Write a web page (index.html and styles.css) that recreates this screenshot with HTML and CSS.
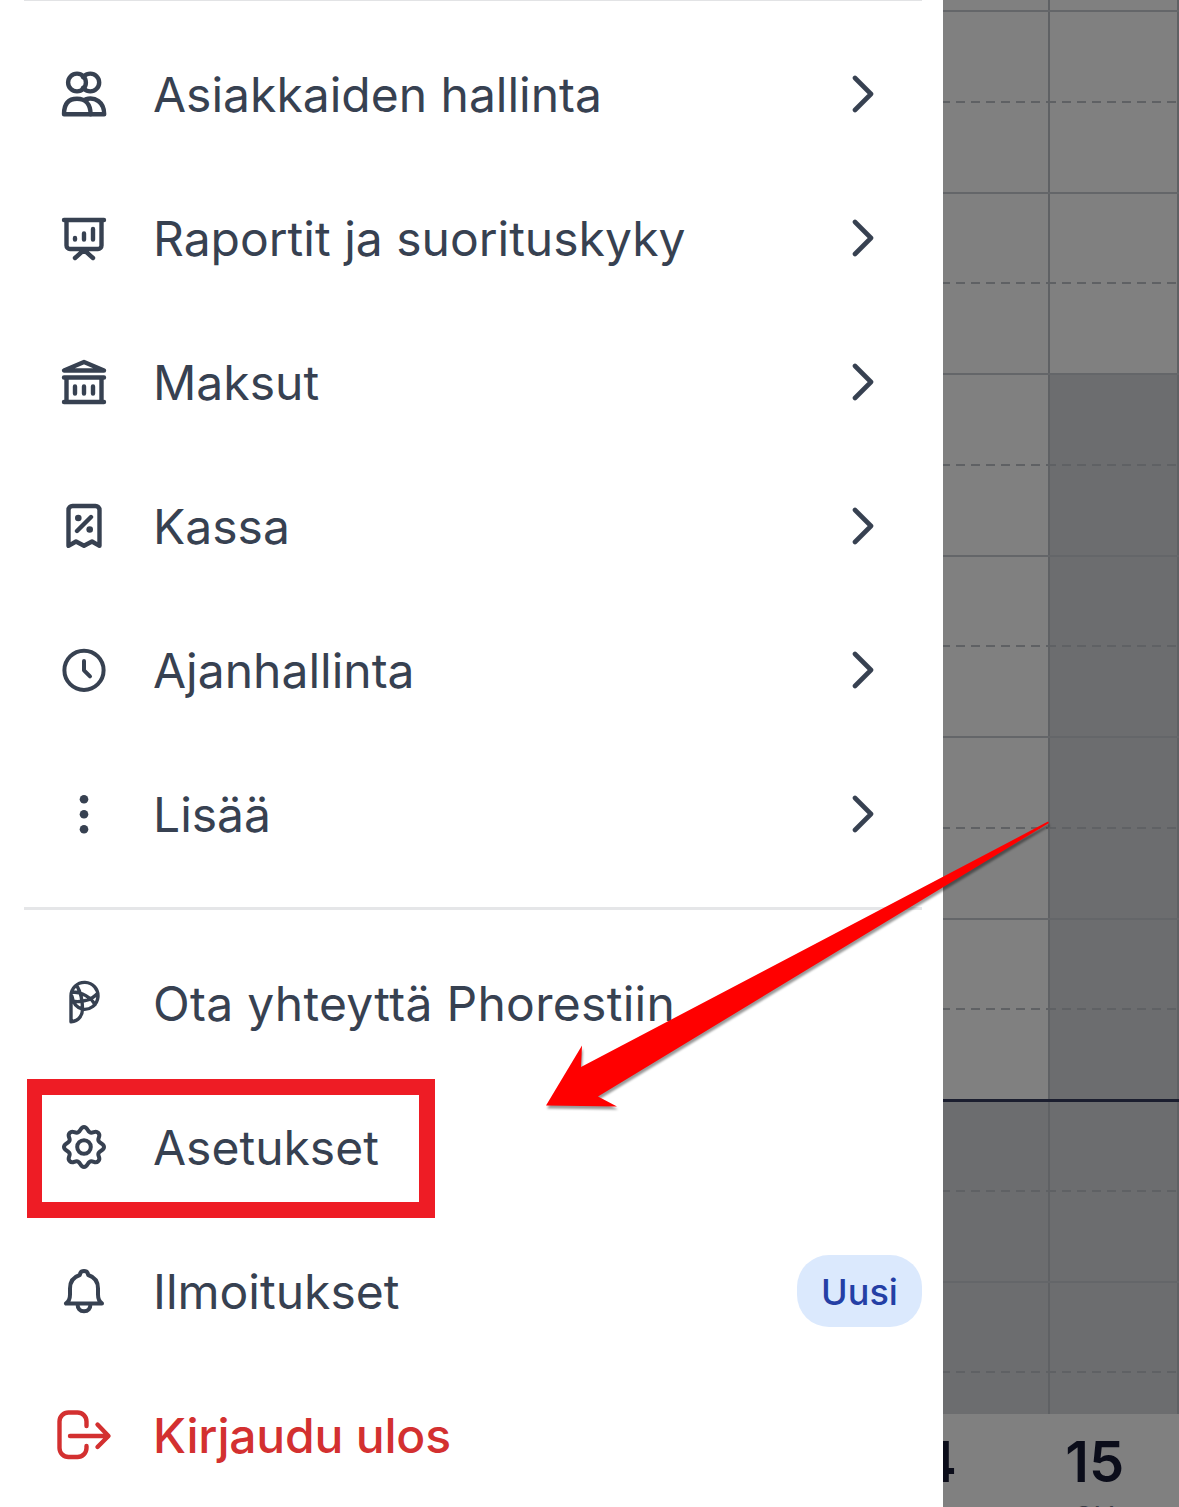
FILE: index.html
```html
<!DOCTYPE html>
<html lang="fi">
<head>
  <meta charset="UTF-8">
  <title>Valikko</title>
  <link rel="stylesheet" href="styles.css">
</head>
<body>
  <div class="screen">
    <nav class="drawer">
      <ul class="menu menu-main">
        <li class="menu-item">
          <svg class="icon" viewBox="0 0 54 54">
            <circle cx="20" cy="15.500" r="8.900"/>
            <path d="M27 9.200a8.900 8.900 0 1 1 0 12.600M27 9.200l-1 1M27 21.800l-1-1"/>
            <path d="M7 47.200C7 37 11.500 31.800 20 31.800S33.600 37 33.600 47.200z"/>
            <path d="M28.500 32.300C38 29.500 47.200 35 47.200 47.200H33.600"/>
          </svg>
          <span class="label">Asiakkaiden hallinta</span>
          <svg class="chevron" viewBox="0 0 24 40"><path d="M3 4l16 16L3 36"/></svg>
        </li>
        <li class="menu-item">
          <svg class="icon" viewBox="0 0 54 54">
            <path d="M7 9h40M9.500 9v25.500a3.500 3.500 0 0 0 3.500 3.500h28a3.500 3.500 0 0 0 3.500-3.500V9M27 39l-9 8M27 39l9 8M18 27v1.500M27 22.500v6M36 18v10.500"/>
          </svg>
          <span class="label">Raportit ja suorituskyky</span>
          <svg class="chevron" viewBox="0 0 24 40"><path d="M3 4l16 16L3 36"/></svg>
        </li>
        <li class="menu-item">
          <svg class="icon" viewBox="0 0 54 54">
            <path d="M7 15.500h40L27 7zM7 22.500h40M9.500 22.500V47M44.500 22.500V47M7 47h40M18 31.500v7M27 31.500v7M36 31.500v7"/>
          </svg>
          <span class="label">Maksut</span>
          <svg class="chevron" viewBox="0 0 24 40"><path d="M3 4l16 16L3 36"/></svg>
        </li>
        <li class="menu-item">
          <svg class="icon" viewBox="0 0 54 54">
            <path d="M11.500 46.800V11a4 4 0 0 1 4-4h23a4 4 0 0 1 4 4v35.800l-7.500-4.300-8 4.300-8-4.300zM20 32l14-14"/>
            <circle class="dot" cx="21.300" cy="19" r="3.300"/>
            <circle class="dot" cx="32.700" cy="30.500" r="3.300"/>
          </svg>
          <span class="label">Kassa</span>
          <svg class="chevron" viewBox="0 0 24 40"><path d="M3 4l16 16L3 36"/></svg>
        </li>
        <li class="menu-item">
          <svg class="icon icon-gear" viewBox="0 0 54 54">
            <circle cx="27" cy="27.300" r="19.600"/>
            <path d="M27 18v9.300l6 6"/>
          </svg>
          <span class="label">Ajanhallinta</span>
          <svg class="chevron" viewBox="0 0 24 40"><path d="M3 4l16 16L3 36"/></svg>
        </li>
        <li class="menu-item">
          <svg class="icon" viewBox="0 0 54 54">
            <circle class="dot" cx="27" cy="12.300" r="4.300"/>
            <circle class="dot" cx="27" cy="27.300" r="4.300"/>
            <circle class="dot" cx="27" cy="42.300" r="4.300"/>
          </svg>
          <span class="label">Lisää</span>
          <svg class="chevron" viewBox="0 0 24 40"><path d="M3 4l16 16L3 36"/></svg>
        </li>
      </ul>

      <ul class="menu menu-secondary">
        <li class="menu-item contact">
          <svg class="icon icon-thin" viewBox="0 0 54 54">
            <path d="M14 45.800V20a13.500 13.500 0 1 1 11.500 13.200M14 45.800c8-1 11.500-6.500 11.500-13 0-9-1.500-16-5.500-23M15.500 16c9.500 0 18.500 5.500 22.500 12.500M14.500 25c10 2 20-1 26-7.500M15 20.500c1 6.500 4.500 11 10.500 12.700"/>
          </svg>
          <span class="label">Ota yhteyttä Phorestiin</span>
        </li>
        <li class="menu-item">
          <svg class="icon icon-gear" viewBox="0 0 54 54">
            <path d="M27 7C31 7 30.500 12.700 34.300 12.700C37 12.700 38.700 10 41.200 12.800C44 15.300 41.300 17 41.300 19.700C41.300 23.500 47 23 47 27C47 31 41.300 30.500 41.300 34.300C41.300 37 44 38.700 41.200 41.200C38.700 44 37 41.300 34.300 41.300C30.500 41.300 31 47 27 47C23 47 23.500 41.300 19.700 41.300C17 41.300 15.300 44 12.800 41.200C10 38.700 12.700 37 12.700 34.300C12.700 30.500 7 31 7 27C7 23 12.700 23.500 12.700 19.700C12.700 17 10 15.300 12.800 12.800C15.300 10 17 12.700 19.700 12.700C23.500 12.700 23 7 27 7Z"/>
            <circle cx="27" cy="27" r="6.800"/>
          </svg>
          <span class="label">Asetukset</span>
        </li>
        <li class="menu-item">
          <svg class="icon icon-gear" viewBox="0 0 54 54">
            <path d="M9 39.500h36c-2.800-2-4-4.500-4-9v-6c0-7-3.500-11.500-9.800-13.500C31 8.500 29.500 7 27 7s-4 1.500-4.200 4C16.500 13 13 17.500 13 24.500v6c0 4.500-1.200 7-4 9zM20.500 40c0 4.500 2.500 7.300 6.500 7.300s6.500-2.800 6.500-7.300"/>
          </svg>
          <span class="label">Ilmoitukset</span>
          <span class="badge">Uusi</span>
        </li>
        <li class="menu-item logout">
          <svg class="icon" viewBox="0 0 54 54">
            <path d="M29.500 18V13.500a9 9 0 0 0-9-9H11.500a9 9 0 0 0-9 9V40a9 9 0 0 0 9 9h9a9 9 0 0 0 9-9V38M13 28h37.500M40.500 16.500L51.500 28 40.500 39"/>
          </svg>
          <span class="label">Kirjaudu ulos</span>
        </li>
      </ul>
    </nav>

    <div class="calendar">
      <div class="slots">
        <div class="slot slot-first"><i></i><i></i></div>
        <div class="slot"><i></i><i></i></div>
        <div class="slot half"><i></i><i></i></div>
        <div class="slot"><i></i><i></i></div>
        <div class="slot half"><i></i><i></i></div>
        <div class="slot"><i></i><i class="closed"></i></div>
        <div class="slot half"><i></i><i class="closed"></i></div>
        <div class="slot"><i></i><i class="closed"></i></div>
        <div class="slot half"><i></i><i class="closed"></i></div>
        <div class="slot"><i></i><i class="closed"></i></div>
        <div class="slot half"><i></i><i class="closed"></i></div>
        <div class="slot"><i></i><i class="closed"></i></div>
        <div class="slot half"><i></i><i class="closed"></i></div>
        <div class="slot now"><i class="closed"></i><i class="closed"></i></div>
        <div class="slot half"><i class="closed"></i><i class="closed"></i></div>
        <div class="slot"><i class="closed"></i><i class="closed"></i></div>
        <div class="slot half"><i class="closed"></i><i class="closed"></i></div>
      </div>
      <div class="days">
        <div class="day"><b>14</b></div>
        <div class="day"><b>15</b><small>SU</small></div>
      </div>
    </div>

    <div class="highlight"></div>
    <svg class="arrow" viewBox="0 0 520 300">
      <path d="M508 1.500L41 247l1-21.500L6 285.500 77 286.500l-19-10L509 3z"/>
    </svg>
  </div>
</body>
</html>
```
FILE: styles.css
```css
* {
  box-sizing: border-box;
}
body {
  margin: 0;
  font-family: Inter, "Liberation Sans", sans-serif;
  color: #374151;
}
.screen {
  position: relative;
  display: flex;
  width: 1179px;
  height: 1507px;
  overflow: hidden;
}
.drawer {
  width: 943px;
  padding: 0 21px 0 24px;
  background: #fff;
}
.menu {
  margin: 0;
  padding: 21px 0;
  list-style: none;
}
.menu-main {
  border-top: 1px solid #e2e3e5;
  border-bottom: 3px solid #e5e6e8;
}
.menu-item {
  display: flex;
  align-items: center;
  height: 144px;
  padding-left: 33px;
}
.label {
  flex: 1;
  margin-left: 42px;
  padding-top: 2px;
  font-size: 48px;
  line-height: 60px;
  white-space: nowrap;
}
.contact .label {
  letter-spacing: 0.3px;
}
.icon,
.chevron {
  fill: none;
  stroke: currentColor;
  stroke-width: 4.4;
  stroke-linecap: round;
  stroke-linejoin: round;
}
.icon {
  width: 54px;
  height: 54px;
  overflow: visible;
}
.icon-thin {
  stroke-width: 3.4;
}
.icon-gear {
  stroke-width: 4;
}
.dot {
  fill: currentColor;
  stroke: none;
}
.chevron {
  width: 24px;
  height: 40px;
  margin-right: 46px;
  stroke-width: 4.6;
}
.badge {
  width: 125px;
  height: 72px;
  border-radius: 32px;
  background: #dbe9fd;
  color: #243fa5;
  font-size: 36px;
  font-weight: 500;
  line-height: 74px;
  text-align: center;
}
.logout {
  color: #d33030;
  font-weight: 500;
}
.logout .label {
  letter-spacing: -0.2px;
}

/* calendar behind the drawer, dimmed */
.calendar {
  flex: 1;
  background: #808080;
  overflow: hidden;
}
.slots {
  height: 1413.500px;
  overflow: hidden;
}
.slot {
  display: grid;
  grid-template-columns: 106.500px 129.500px;
  height: 90.750px;
  border-top: 2px solid #646669;
}
.slot-first {
  height: 10px;
  border-top: 0;
}
.slot.half {
  border-top: 0;
}
.slot.now {
  border-top: 3px solid #1b1e2f;
}
.slot i {
  border-right: 2px solid #5f6164;
}
.slot .closed {
  background-color: #6c6d6f;
}
.half i {
  background-image: repeating-linear-gradient(90deg, #5f6164 0 9px, transparent 9px 15px);
  background-size: 180px 2px;
  background-position: -2px 0;
  background-repeat: repeat-x;
}
.half i:last-child {
  background-position: -3px 0;
}
.days {
  display: flex;
  justify-content: flex-end;
}
.day {
  flex: none;
  width: 168.400px;
  color: #0b0d1a;
  text-align: center;
}
.day b {
  display: block;
  padding-top: 15px;
  font-size: 56px;
  font-weight: 600;
  line-height: 66px;
}
.day small {
  display: block;
  padding-top: 4px;
  font-size: 30px;
  line-height: 36px;
  color: #3b3d45;
}

/* annotations */
.highlight {
  position: absolute;
  left: 27px;
  top: 1079px;
  width: 408px;
  height: 139px;
  border: 16px solid #ee1c25;
  border-left-width: 15px;
}
.arrow {
  position: absolute;
  left: 540px;
  top: 820px;
  width: 520px;
  height: 300px;
  fill: #f00;
  filter: drop-shadow(1px 3px 1px rgba(0,0,0,0.4));
}
```
